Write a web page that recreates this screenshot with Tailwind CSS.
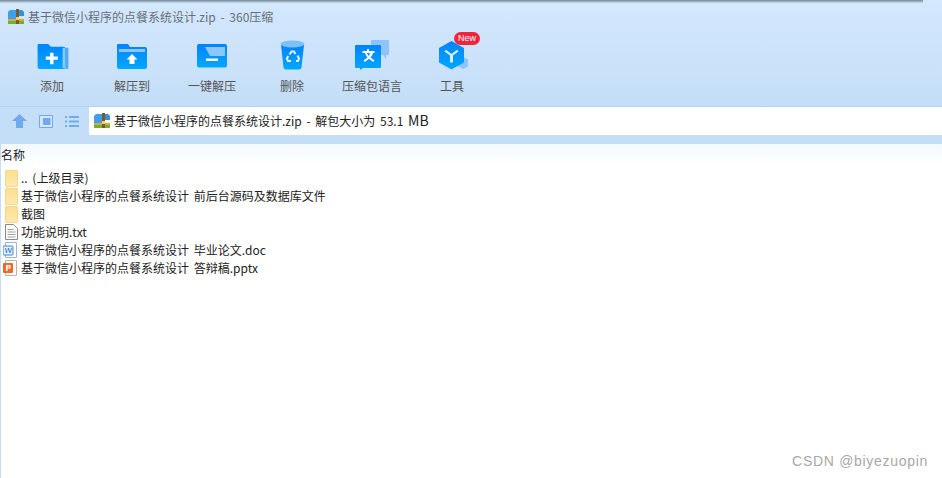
<!DOCTYPE html>
<html lang="en">
  <head>
    <meta charset="UTF-8" />
    <title>基于微信小程序的点餐系统设计.zip - 360压缩</title>
    <script src="https://cdn.jsdelivr.net/npm/@tailwindcss/browser@4"></script>
  </head>
  <body class="relative w-[942px] h-[478px] overflow-hidden bg-white font-['Noto_Sans_CJK_SC','Noto_Sans',sans-serif] text-[12px] [word-spacing:2px]">
    <!-- top chrome -->
    <header class="relative h-[107px] bg-gradient-to-b from-[#d4e8fe] to-[#c4def7] border-b border-[#b5d4f2]">
      <div class="absolute left-0 top-0 w-[923px] h-[3px] bg-gradient-to-b from-[#76858f] to-[#c9e0f6]"></div>
      <div class="flex items-center h-[33px] pl-[8px] pt-[1px] text-[#666f78]">
        <svg class="w-[16px] h-[16px] mr-[4px]" viewBox="0 0 16 16">
          <path d="M0 3 2 1h7v13H0z" fill="#3da0ec" />
          <path d="M9 1h5l2 2v4H9z" fill="#3a90d8" />
          <path d="M0 10h16v2H0z" fill="#f0a030" />
          <path d="M0 12h16v3H0z" fill="#6cb13a" />
          <path d="M8 0h3v15H8z" fill="#7a5a28" />
          <path d="M8 8h3v3H8z" fill="#f3cf6a" />
        </svg>
        <span class="leading-[16px]">基于微信小程序的点餐系统设计.zip - 360压缩</span>
      </div>

      <nav class="flex pl-[12px] text-[#555]">
        <div class="w-[80px] flex flex-col items-center">
          <div class="h-[44px] flex items-center justify-center pt-[2px]">
            <svg class="w-[32px] h-[26px] ml-[1px]" viewBox="0 0 32 27">
              <defs>
                <linearGradient id="blue" x1="0" y1="0" x2="0" y2="1">
                  <stop offset="0" stop-color="#0083fc" />
                  <stop offset="1" stop-color="#00a8ff" />
                </linearGradient>
              </defs>
              <path d="M29 5h2a1 1 0 0 1 1 1v20a1 1 0 0 1-1 1h-2z" fill="#55a9fb" />
              <path d="M0 2a1 1 0 0 1 1-1h10l3 3h13a2 2 0 0 1 2 2v19a2 2 0 0 1-2 2H2a2 2 0 0 1-2-2z" fill="url(#blue)" />
              <path d="M26 5h2.500v21H26z" fill="#8cc8fd" />
              <path d="M13 10h3.500v4H21v3.500h-4.500V22H13v-4.500H8.500V14H13z" fill="#fff" />
            </svg>
          </div>
          <span class="leading-[18px]">添加</span>
        </div>
        <div class="w-[80px] flex flex-col items-center">
          <div class="h-[44px] flex items-center justify-center pt-[2px]">
            <svg class="w-[30px] h-[26px]" viewBox="0 0 30 26">
              <path d="M0 2a1 1 0 0 1 1-1h10l2 3h15a2 2 0 0 1 2 2v18a2 2 0 0 1-2 2H2a2 2 0 0 1-2-2z" fill="url(#blue)" />
              <path d="M2 6h26v3H2z" fill="#8cc8fd" />
              <path d="M15 11l5.500 5.500H17.500V21h-5v-4.500H9.500z" fill="#fff" />
            </svg>
          </div>
          <span class="leading-[18px]">解压到</span>
        </div>
        <div class="w-[80px] flex flex-col items-center">
          <div class="h-[44px] flex items-center justify-center pt-[2px]">
            <svg class="w-[30px] h-[24px]" viewBox="0 0 30 24">
              <rect width="30" height="23.500" rx="2" fill="url(#blue)" />
              <path d="M8 3h20v9H13z" fill="#8cc8fd" />
              <path d="M9 14.500h12V17H9z" fill="#fff" />
            </svg>
          </div>
          <span class="leading-[18px]">一键解压</span>
        </div>
        <div class="w-[80px] flex flex-col items-center">
          <div class="h-[44px] flex items-center justify-center">
            <svg class="w-[25px] h-[30px]" viewBox="0 0 25 30">
              <path d="M1 5h23l-2.500 22.500a2.500 2.500 0 0 1-2.500 2H6a2.500 2.500 0 0 1-2.500-2z" fill="url(#blue)" />
              <ellipse cx="12.500" cy="4" rx="12" ry="3.500" fill="#7fc0fb" />
              <g fill="none" stroke="#e4f3ff" stroke-width="2">
                <path d="M9.500 14.500 11.500 11.500h2.500l1.500 2.500" />
                <path d="M17.500 15.500l1.500 3-1 2.500h-2" />
                <path d="M11 21H8l-1.200-2.500 1.500-2.500" />
              </g>
            </svg>
          </div>
          <span class="leading-[18px]">删除</span>
        </div>
        <div class="w-[80px] flex flex-col items-center">
          <div class="h-[44px] flex items-center justify-center">
            <svg class="w-[34px] h-[30px]" viewBox="0 0 34 30">
              <path d="M16 1a1 1 0 0 1 1-1h16a1 1 0 0 1 1 1v13a1 1 0 0 1-1 1h-2v4l-3-4H16z" fill="#8cc4fd" />
              <path d="M0 6a1 1 0 0 1 1-1h24a1 1 0 0 1 1 1v21a1 1 0 0 1-1 1H8l-3 2v-2H1a1 1 0 0 1-1-1z" fill="url(#blue)" />
              <path d="M12 9h2v2h5.500v2H18a10 10 0 0 1-2.500 4.500l4 3-1.200 1.600-4.300-3.300-4.300 3.300-1.200-1.600 4-3A10 10 0 0 1 10 13H7.500v-2H12zM12 13a8 8 0 0 0 1.500 3 8 8 0 0 0 1.500-3z" fill="#fff" fill-rule="evenodd" />
            </svg>
          </div>
          <span class="leading-[18px]">压缩包语言</span>
        </div>
        <div class="relative w-[80px] flex flex-col items-center">
          <div class="h-[44px] flex items-center justify-center">
            <svg class="w-[30px] h-[29px] ml-[4px]" viewBox="0 0 30 29">
              <path d="M24 16l5 2.500v7L24 28l-5-2.500z" fill="#8cc4fd" />
              <path d="M12.500 0l12.500 7v14.500L12.500 28.500 0 21.500V7z" fill="url(#blue)" />
              <path d="M11 14.500 5.500 10.500l1.400-1.700 5.600 4.200 5.600-4.200 1.400 1.700-5.500 4v7h-3z" fill="#d8eeff" />
            </svg>
          </div>
          <span class="leading-[18px]">工具</span>
          <span class="absolute left-[42px] top-[-1px] w-[26px] h-[13px] rounded-full bg-[#f2243c] text-white text-[9px] leading-[13px] text-center font-['Liberation_Sans']">New</span>
        </div>
      </nav>
    </header>

    <!-- address bar -->
    <div class="flex h-[28px] bg-[#c4def7]">
      <div class="w-[89px] flex items-center pl-[12px] gap-[12px]">
        <svg class="w-[15px] h-[14px]" viewBox="0 0 15 14">
          <path d="M7.500 0 15 7h-4v7H4V7H0z" fill="#70a9ec" />
        </svg>
        <svg class="w-[14px] h-[13px]" viewBox="0 0 14 13">
          <path d="M.5.500h13v12H.5z" fill="#d5e6fa" stroke="#70a9ec" />
          <path d="M4 3h7.500v7H4z" fill="#70a9ec" />
        </svg>
        <svg class="w-[14px] h-[11px]" viewBox="0 0 14 11">
          <path d="M0 0h2v2H0zM4 0h10v2H4zM0 4.500h2v2H0zM4 4.500h10v2H4zM0 9h2v2H0zM4 9h10v2H4z" fill="#70a9ec" />
        </svg>
      </div>
      <div class="flex-1 flex items-center bg-white pl-[5px] text-[#222]">
        <svg class="w-[16px] h-[16px] mr-[4px]" viewBox="0 0 16 16">
          <path d="M0 3 2 1h7v13H0z" fill="#3da0ec" />
          <path d="M9 1h5l2 2v4H9z" fill="#3a90d8" />
          <path d="M0 10h16v2H0z" fill="#f0a030" />
          <path d="M0 12h16v3H0z" fill="#6cb13a" />
          <path d="M8 0h3v15H8z" fill="#7a5a28" />
          <path d="M8 8h3v3H8z" fill="#f3cf6a" />
        </svg>
        <span>基于微信小程序的点餐系统设计.zip - 解包大小为 53.1 <span class="text-[14px] leading-none">MB</span></span>
      </div>
    </div>
    <div class="h-[9px] bg-[#c4def7]"></div>

    <!-- file list -->
    <main class="h-[334px] border-l border-[#c4def7] text-[#222]">
      <div class="h-[22px] pt-[2px] leading-[18px] bg-gradient-to-b from-[#f3f9ff] to-white">名称</div>
      <ul class="pl-[4px] pt-[3px]">
        <li class="flex items-center h-[18px]">
          <span class="w-[13px] h-[17px] rounded-[1px] border border-[#f5d98a] bg-gradient-to-b from-[#fcdf8f] to-[#fdeaae] mr-[3px]"></span>
          <span>.. (上级目录)</span>
        </li>
        <li class="flex items-center h-[18px]">
          <span class="w-[13px] h-[17px] rounded-[1px] border border-[#f5d98a] bg-gradient-to-b from-[#fcdf8f] to-[#fdeaae] mr-[3px]"></span>
          <span>基于微信小程序的点餐系统设计 前后台源码及数据库文件</span>
        </li>
        <li class="flex items-center h-[18px]">
          <span class="w-[13px] h-[17px] rounded-[1px] border border-[#f5d98a] bg-gradient-to-b from-[#fcdf8f] to-[#fdeaae] mr-[3px]"></span>
          <span>截图</span>
        </li>
        <li class="flex items-center h-[18px]">
          <svg class="w-[13px] h-[16px] mr-[3px]" viewBox="0 0 13 16">
            <path d="M.5.500h8l4 4v11H.5z" fill="#fff" stroke="#8a8a8a" />
            <path d="M2.500 5h6v1h-6zM2.500 7.500h8v1h-8zM2.500 10h8v1h-8zM2.500 12.500h8v1h-8z" fill="#a0a0a0" />
          </svg>
          <span>功能说明.txt</span>
        </li>
        <li class="flex items-center h-[18px] -ml-[2px]">
          <svg class="w-[14px] h-[16px] mr-[4px]" viewBox="0 0 14 16">
            <path d="M2.500.500h11v15h-11z" fill="#fff" stroke="#9ab6d8" />
            <rect y="4" width="10" height="9" rx="1" fill="#e6f0fb" stroke="#3f83d4" />
            <path d="M2 6h1l1 4 1-4h1l1 4 1-4h1l-1.500 5h-1L5 7.500 4 11H3z" fill="#3f83d4" />
          </svg>
          <span>基于微信小程序的点餐系统设计 毕业论文.doc</span>
        </li>
        <li class="flex items-center h-[18px] -ml-[2px]">
          <svg class="w-[14px] h-[16px] mr-[4px]" viewBox="0 0 14 16">
            <path d="M2.500.500h11v15h-11z" fill="#fff" stroke="#c9b0a6" />
            <rect y="3" width="10" height="10" rx="1" fill="#ee6a2c" />
            <path d="M3 5h4.500v3.500H4.500V11H3zM4.500 6.200v1.200h1.500V6.200z" fill="#fff" fill-rule="evenodd" />
          </svg>
          <span>基于微信小程序的点餐系统设计 答辩稿.pptx</span>
        </li>
      </ul>
    </main>

    <span class="absolute right-[14px] bottom-[8px] text-[14px] leading-[18px] tracking-[0.7px] [word-spacing:0] text-[#a8a8a8] font-['Liberation_Sans']">CSDN @biyezuopin</span>
  </body>
</html>
